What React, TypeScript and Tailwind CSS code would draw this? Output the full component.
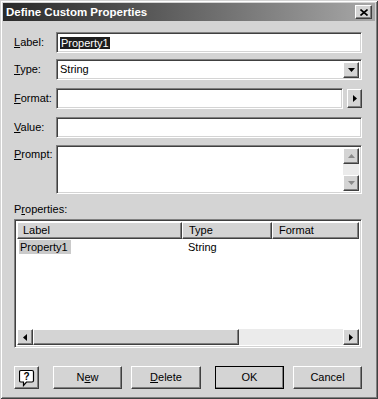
import React from 'react';

const sunken =
  'border border-t-[#808080] border-l-[#808080] border-b-white border-r-white shadow-[inset_1px_1px_0_#404040,inset_-1px_-1px_0_#d4d4d4]';
const raised =
  'border border-t-white border-l-white border-b-[#404040] border-r-[#404040] shadow-[inset_-1px_-1px_0_#808080]';

const Tri: React.FC<{ dir: 'down' | 'up' | 'left' | 'right'; color?: string }> = ({ dir, color = '#000' }) => {
  const pts = {
    down: '0,0 7,0 3.5,4',
    up: '0,4 7,4 3.5,0',
    left: '4,0 4,7 0,3.5',
    right: '0,0 0,7 4,3.5',
  }[dir];
  const vertical = dir === 'up' || dir === 'down';
  return (
    <svg width={vertical ? 7 : 4} height={vertical ? 4 : 7} viewBox={vertical ? '0 0 7 4' : '0 0 4 7'}>
      <polygon points={pts} fill={color} />
    </svg>
  );
};

const Field: React.FC<{ label: React.ReactNode; children: React.ReactNode; className?: string }> = ({ label, children, className }) => (
  <div className={`flex items-center h-[21px] ${className ?? ''}`}>
    <span className="w-[42px] shrink-0">{label}</span>
    {children}
  </div>
);

const Button: React.FC<{ children: React.ReactNode; isDefault?: boolean; className?: string }> = ({ children, isDefault, className }) => (
  <button
    className={`h-[23px] flex items-center justify-center ${isDefault ? 'outline outline-1 outline-black -outline-offset-1' : ''} ${className ?? ''}`}
  >
    <span className={`w-full h-full flex items-center justify-center ${raised}`}>{children}</span>
  </button>
);

const App: React.FC = () => {
  return (
    <div
      className="relative w-[378px] h-[399px] bg-[#d4d4d4] text-black text-[11px] leading-[13px] overflow-hidden select-none shadow-[inset_1px_1px_0_#d4d4d4,inset_-1px_-1px_0_#404040,inset_2px_2px_0_#ffffff,inset_-2px_-2px_0_#808080]"
      style={{ fontFamily: '"Liberation Sans", Arial, sans-serif' }}
    >
      {/* Title bar */}
      <div className="mx-[3px] mt-[3px] h-[18px] flex items-center justify-between pl-[3px] pr-[3px] bg-linear-to-r from-[#2a2a2a] to-[#a8a8a8]">
        <span className="text-white font-bold text-[11.5px] leading-[14px]">Define Custom Properties</span>
        <div className={`w-[17px] h-[14px] bg-[#d4d4d4] flex items-center justify-center ${raised}`}>
          <svg width="8" height="7" viewBox="0 0 8 7">
            <path d="M0.5 0.5 L7.5 6.5 M7.5 0.5 L0.5 6.5" stroke="#000" strokeWidth="1.6" />
          </svg>
        </div>
      </div>

      <div className="pl-[14px] pr-[16px]">
        <Field
          className="mt-[11px]"
          label={
            <>
              <span className="underline">L</span>abel:
            </>
          }
        >
          <div className={`flex-1 h-full bg-white flex items-center pl-[3px] ${sunken}`}>
            <span className="bg-[#1e1e1e] text-white px-[1px] leading-[12px]">Property1</span>
          </div>
        </Field>

        <Field
          className="mt-[6px]"
          label={
            <>
              <span className="underline">T</span>ype:
            </>
          }
        >
          <div className={`flex-1 h-full bg-white flex items-center pl-[3px] pr-[2px] ${sunken}`}>
            <span className="flex-1">String</span>
            <div className={`w-[16px] h-[16px] bg-[#d4d4d4] flex items-center justify-center ${raised}`}>
              <Tri dir="down" />
            </div>
          </div>
        </Field>

        <Field
          className="mt-[8px]"
          label={
            <>
              <span className="underline">F</span>ormat:
            </>
          }
        >
          <div className={`w-[287px] h-full bg-white ${sunken}`} />
          <div className={`ml-[4px] w-[15px] h-[19px] bg-[#d4d4d4] flex items-center justify-center ${raised}`}>
            <Tri dir="right" />
          </div>
        </Field>

        <Field
          className="mt-[8px]"
          label={
            <>
              <span className="underline">V</span>alue:
            </>
          }
        >
          <div className={`flex-1 h-full bg-white ${sunken}`} />
        </Field>

        <div className="mt-[7px] flex items-start h-[49px]">
          <span className="w-[42px] shrink-0 pt-[3px]">
            <span className="underline">P</span>rompt:
          </span>
          <div className={`flex-1 h-full bg-white flex justify-end p-[2px] ${sunken}`}>
            <div className="w-[16px] h-full flex flex-col bg-[#ebebeb]">
              <div className={`h-[16px] bg-[#d4d4d4] flex items-center justify-center ${raised}`}>
                <Tri dir="up" color="#8a8a8a" />
              </div>
              <div className="flex-1" />
              <div className={`h-[16px] bg-[#d4d4d4] flex items-center justify-center ${raised}`}>
                <Tri dir="down" color="#8a8a8a" />
              </div>
            </div>
          </div>
        </div>

        <div className="mt-[9px] h-[12px] leading-[12px]">
          P<span className="underline">r</span>operties:
        </div>

        {/* List view */}
        <div className={`mt-[4px] h-[129px] bg-white flex flex-col p-[2px] ${sunken}`}>
          <div className="flex h-[17px] shrink-0">
            <div className={`w-[165px] bg-[#d4d4d4] flex items-center pl-[5px] ${raised}`}>Label</div>
            <div className={`w-[90px] bg-[#d4d4d4] flex items-center pl-[6px] ${raised}`}>Type</div>
            <div className={`flex-1 bg-[#d4d4d4] flex items-center pl-[6px] ${raised}`}>Format</div>
          </div>
          <div className="flex-1 pt-[1px]">
            <div className="flex h-[14px] items-center">
              <div className="w-[165px] pl-[2px]">
                <span className="bg-[#cacaca] px-[1px] inline-block h-[14px] leading-[14px] pr-[3px]">Property1</span>
              </div>
              <div className="pl-[6px]">String</div>
            </div>
          </div>
          <div className="flex h-[16px] shrink-0 bg-[#ebebeb]">
            <div className={`w-[16px] bg-[#d4d4d4] flex items-center justify-center ${raised}`}>
              <Tri dir="left" />
            </div>
            <div className={`w-[206px] bg-[#d4d4d4] ${raised}`} />
            <div className="flex-1" />
            <div className={`w-[16px] bg-[#d4d4d4] flex items-center justify-center ${raised}`}>
              <Tri dir="right" />
            </div>
          </div>
        </div>

        {/* Buttons */}
        <div className="mt-[18px] flex items-center">
          <Button className="w-[25px]">
            <svg width="16" height="18" viewBox="0 0 16 18">
              <path
                d="M2 1.5 H13 Q14.5 1.5 14.5 3 V11.5 Q14.5 13 13 13 H7.5 L4.5 16.5 V13 H2 Q0.5 13 0.5 11.5 V3 Q0.5 1.5 2 1.5 Z"
                fill="#fff"
                stroke="#000"
                strokeWidth="1.2"
              />
              <text x="7.5" y="11" textAnchor="middle" fontSize="10" fontWeight="bold" fontFamily="Liberation Sans, Arial, sans-serif" fill="#000">
                ?
              </text>
            </svg>
          </Button>
          <Button className="w-[69px] ml-[14px]">
            N<span className="underline">e</span>w
          </Button>
          <Button className="w-[70px] ml-[9px]">
            <span className="underline">D</span>elete
          </Button>
          <Button isDefault className="w-[69px] ml-[14px]">
            OK
          </Button>
          <Button className="w-[69px] ml-[9px]">Cancel</Button>
        </div>
      </div>
    </div>
  );
};

export default App;
